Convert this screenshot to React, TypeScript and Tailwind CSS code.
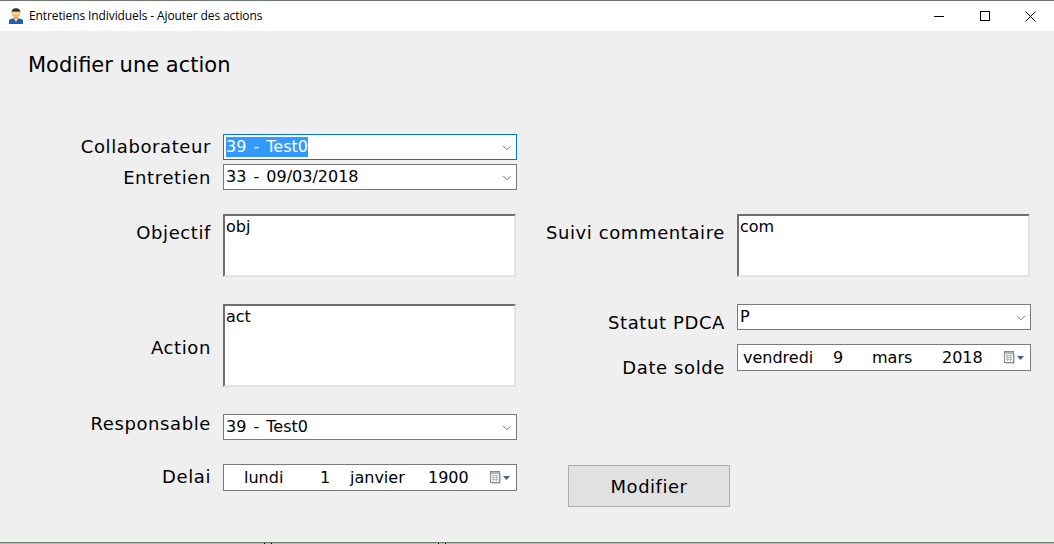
import { ChevronDown } from "lucide-react";

const font = "font-['DejaVu_Sans',sans-serif]";

function AppIcon() {
  return (
    <svg width="16" height="18" viewBox="0 0 16 18" className="block">
      <path d="M1 17 L1 14 Q1 12 5 11.5 L11 11.5 Q15 12 15 14 L15 17 Z" fill="#1f5fa8" />
      <path d="M6 11.5 L8 15 L10 11.5 Z" fill="#e8e8e8" />
      <rect x="6" y="9.5" width="4" height="2.5" fill="#e2a860" />
      <ellipse cx="8" cy="6.5" rx="4" ry="4.2" fill="#f0b96c" />
      <path d="M3.6 6 Q3.4 1.2 8 1.2 Q12.6 1.2 12.4 6 L11.4 4.6 L4.6 4.6 Z" fill="#2b2b2b" />
      <rect x="4.6" y="5.8" width="6.8" height="1" fill="#fff3d8" />
    </svg>
  );
}

function WindowButtons() {
  return (
    <div className="flex items-center h-full">
      <div className="w-[46px] flex justify-center">
        <div className="w-[10px] h-px bg-black" />
      </div>
      <div className="w-[46px] flex justify-center">
        <div className="w-[10px] h-[10px] border border-black" />
      </div>
      <div className="w-[46px] flex justify-center pr-[2px]">
        <svg width="11" height="11" viewBox="0 0 11 11">
          <path d="M0.5 0.5 L10.5 10.5 M10.5 0.5 L0.5 10.5" stroke="#000" strokeWidth="1" fill="none" />
        </svg>
      </div>
    </div>
  );
}

function CalendarIcon() {
  return (
    <div className="flex items-center gap-[2px]">
      <svg width="11" height="13" viewBox="0 0 11 13" className="block">
        <rect x="0.5" y="0.5" width="9" height="11" fill="#f2f2f2" stroke="#8c8c8c" />
        <rect x="1" y="1" width="8" height="2" fill="#b5b5b5" />
        <path d="M2 4.5 H8 M2 6.5 H8 M2 8.5 H8 M3.5 4 V10 M6.5 4 V10" stroke="#b9bfc7" strokeWidth="1" />
        <path d="M10.5 3 V12.5 H2" stroke="#cfcfcf" fill="none" />
      </svg>
      <svg width="7" height="4" viewBox="0 0 7 4" className="block">
        <path d="M0 0 H7 L3.5 4 Z" fill="#4a5f85" />
      </svg>
    </div>
  );
}

function Combo({ value, focused }: { value: string; focused?: boolean }) {
  return (
    <div
      className={`w-[294px] h-[26px] bg-white border flex items-center justify-between pl-[2px] pr-[2px] text-[16px] [word-spacing:2px] text-black ${
        focused ? "border-[#0078d7]" : "border-[#7a7a7a]"
      }`}
    >
      {focused ? <span className="bg-[#3399ff] text-white leading-[20px] h-[20px]">{value}</span> : <span className="leading-[20px]">{value}</span>}
      <ChevronDown size={14} strokeWidth={1.4} className="text-[#555555] mt-[2px]" />
    </div>
  );
}

function MemoBox({ value, h }: { value: string; h: string }) {
  return (
    <div
      className={`w-[293px] ${h} bg-white border-2 border-t-[#6e6e6e] border-l-[#6e6e6e] border-r-[#e3e3e3] border-b-[#e3e3e3] px-px pt-px text-[16px] leading-[20px] text-black`}
    >
      {value}
    </div>
  );
}

function DateField({ parts, cols }: { parts: string[]; cols: string[] }) {
  return (
    <div className="w-[294px] h-[27px] bg-white border border-[#7a7a7a] flex items-center pr-[6px] text-[16px] text-black">
      <div className="flex-1 flex items-center">
        {parts.map((p, i) => (
          <span key={i} className={cols[i]}>
            {p}
          </span>
        ))}
      </div>
      <CalendarIcon />
    </div>
  );
}

function Label({ children, w, className }: { children: string; w: string; className?: string }) {
  return (
    <div className={`${w} shrink-0 text-right text-[18px] tracking-[0.6px] leading-[22px] text-black ${className ?? ""}`}>
      {children}
    </div>
  );
}

export default function App() {
  return (
    <div className={`w-[1054px] h-[544px] overflow-hidden bg-[#efefef] flex flex-col ${font}`}>
      <div className="h-[31px] shrink-0 bg-white border-t border-[#6f7d6f] flex items-center justify-between">
        <div className="flex items-center pl-[8px] gap-[5px] font-['Open_Sans',sans-serif] text-[12px] text-black">
          <AppIcon />
          <span className="tracking-[-0.1px]">Entretiens Individuels - Ajouter des actions</span>
        </div>
        <WindowButtons />
      </div>

      <div className="h-[512px] shrink-0 border-b border-[#6f7d6f] flex flex-col">
        <h1 className="pl-[28px] pt-[21px] h-[103px] shrink-0 text-[21px] leading-[26px] font-normal text-black">Modifier une action</h1>

        <div className="flex">
          {/* left column */}
          <div className="w-[517px] shrink-0 flex flex-col">
            <div className="flex gap-[12px]">
              <Label w="w-[211px]" className="pt-[2px]">Collaborateur</Label>
              <Combo value="39 - Test0" focused />
            </div>
            <div className="flex gap-[12px] mt-[4px]">
              <Label w="w-[211px]" className="pt-[3px]">Entretien</Label>
              <Combo value="33 - 09/03/2018" />
            </div>
            <div className="flex gap-[12px] mt-[24px]">
              <Label w="w-[211px]" className="pt-[8px]">Objectif</Label>
              <MemoBox value="obj" h="h-[63px]" />
            </div>
            <div className="flex gap-[12px] mt-[27px]">
              <Label w="w-[211px]" className="pt-[33px]">Action</Label>
              <MemoBox value="act" h="h-[83px]" />
            </div>
            <div className="flex gap-[12px] mt-[27px]">
              <Label w="w-[211px]" className="-mt-px">Responsable</Label>
              <Combo value="39 - Test0" />
            </div>
            <div className="flex gap-[12px] mt-[24px]">
              <Label w="w-[211px]" className="pt-[2px]">Delai</Label>
              <DateField parts={["lundi", "1", "janvier", "1900"]} cols={["ml-[20px] w-[76px]", "w-[30px]", "w-[78px]", ""]} />
            </div>
          </div>

          {/* right column */}
          <div className="flex-1 flex flex-col">
            <div className="flex gap-[12px] mt-[80px]">
              <Label w="w-[208px]" className="pt-[8px]">Suivi commentaire</Label>
              <MemoBox value="com" h="h-[63px]" />
            </div>
            <div className="flex gap-[12px] mt-[27px]">
              <Label w="w-[208px]" className="pt-[8px]">Statut PDCA</Label>
              <Combo value="P" />
            </div>
            <div className="flex gap-[12px] mt-[10px]">
              <Label w="w-[208px]" className="pt-[13px]">Date solde</Label>
              <DateField parts={["vendredi", "9", "mars", "2018"]} cols={["ml-[5px] w-[90px]", "w-[39px]", "w-[70px]", ""]} />
            </div>
            <button className="mt-[86px] ml-[51px] w-[162px] h-[42px] bg-[#e1e1e1] border border-[#adadad] text-[18px] tracking-[0.5px] text-black">
              Modifier
            </button>
          </div>
        </div>
      </div>

      {/* strip of the window behind */}
      <div className="h-px shrink-0 bg-[#b4bbb4] flex pl-[264px]">
        <div className="w-px h-px bg-black" />
        <div className="w-px h-px bg-black ml-[6px]" />
        <div className="w-px h-px bg-black ml-[166px]" />
        <div className="w-px h-px bg-black ml-[6px]" />
      </div>
    </div>
  );
}
